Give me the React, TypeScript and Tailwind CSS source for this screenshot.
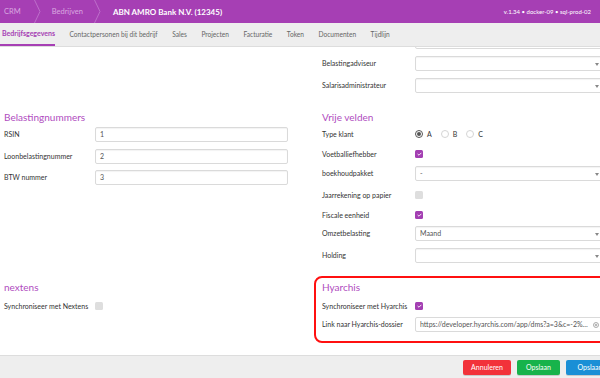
import React from "react";

const font = { fontFamily: "Lato, 'Noto Sans', sans-serif" };

function Chevron() {
  return (
    <svg width="7" height="23" viewBox="0 0 7 23" className="shrink-0">
      <polyline points="0.5,0 6,11.5 0.5,23" fill="none" stroke="#bd6fca" strokeWidth="1" />
    </svg>
  );
}

function Caret() {
  return (
    <svg width="4" height="3" viewBox="0 0 4 3" className="absolute right-[4px] top-[6px]">
      <path d="M0 0 L4 0 L2 3 Z" fill="#888" />
    </svg>
  );
}

function TextInput({ value, width, select }: { value?: string; width: string; select?: boolean }) {
  return (
    <div
      className={`relative h-[15px] ${width} shrink-0 rounded-[2px] border border-[#dadada] bg-white pl-[4px] text-[7px] leading-[13px] text-[#555] shadow-[inset_0_1px_1px_rgba(0,0,0,0.05)]`}
    >
      {value}
      {select && <Caret />}
    </div>
  );
}

function Check({ on }: { on: boolean }) {
  return on ? (
    <div className="flex h-[8px] w-[8px] items-center justify-center rounded-[1.5px] bg-[#a33fb2]">
      <svg width="5" height="4" viewBox="0 0 5 4">
        <polyline points="0.6,2 2,3.2 4.4,0.8" fill="none" stroke="#fff" strokeWidth="0.9" />
      </svg>
    </div>
  ) : (
    <div className="h-[8px] w-[8px] rounded-[1.5px] bg-[#dedede]" />
  );
}

function Radio({ label, on }: { label: string; on?: boolean }) {
  return (
    <div className="mr-[9px] flex items-center">
      <div
        className={`flex h-[8px] w-[8px] items-center justify-center rounded-full border ${
          on ? "border-[#555]" : "border-[#d5d5d5]"
        }`}
      >
        {on && <div className="h-[3.5px] w-[3.5px] rounded-full bg-[#555]" />}
      </div>
      <span className="ml-[4px] text-[7px] text-[#333]">{label}</span>
    </div>
  );
}

function Row({
  label,
  labelWidth,
  children,
  className = "",
}: {
  label: string;
  labelWidth: string;
  children?: React.ReactNode;
  className?: string;
}) {
  return (
    <div className={`flex items-center ${className}`}>
      <div className={`${labelWidth} shrink-0 text-[7px] text-[#333]`}>{label}</div>
      {children}
    </div>
  );
}

function Heading({ children, className = "" }: { children: React.ReactNode; className?: string }) {
  return <div className={`h-[12px] text-[10px] leading-[12px] text-[#b04cc0] ${className}`}>{children}</div>;
}

export default function App() {
  const tabs = [
    "Contactpersonen bij dit bedrijf",
    "Sales",
    "Projecten",
    "Facturatie",
    "Token",
    "Documenten",
    "Tijdlijn",
  ];
  const L = "w-[91px]";
  const R = "w-[93px]";
  const rIn = "w-[189px]";

  return (
    <div style={font} className="flex h-[378px] w-[600px] flex-col overflow-hidden bg-white">
      {/* header */}
      <div className="flex h-[23px] shrink-0 items-center bg-[#a63fb4]">
        <span className="ml-[4px] text-[7.5px] text-[#d9a9e0]">CRM</span>
        <span className="ml-[13px]"><Chevron /></span>
        <span className="ml-[11px] text-[7.5px] text-[#d9a9e0]">Bedrijven</span>
        <span className="ml-[11px]"><Chevron /></span>
        <span className="ml-[12px] text-[8px] font-bold text-white">ABN AMRO Bank N.V. (12345)</span>
        <span className="ml-auto mr-[9px] text-[6px] text-white">v.1.34 • docker-09 • sql-prod-02</span>
      </div>

      {/* tabs */}
      <div className="flex h-[24px] shrink-0 items-stretch gap-[14.5px] border-b border-[#dddddd] bg-[#eeeeee]">
        <div className="flex items-center border-b-2 border-[#a63fb4] pl-[2px] text-[7px] font-bold text-[#a63fb4]">
          Bedrijfsgegevens
        </div>
        {tabs.map((t) => (
          <div key={t} className="flex items-center text-[6.6px] text-[#666]">
            {t}
          </div>
        ))}
      </div>

      {/* content */}
      <div className="flex min-h-0 flex-1 flex-col overflow-hidden">
        {/* section A */}
        <div className="flex shrink-0">
          <div className="w-[314px] shrink-0" />
          <div className="pl-[8px]">
            <div className="-mt-[13px] ml-[93px] mb-[7px]">
              <TextInput width={rIn} select />
            </div>
            <Row label="Belastingadviseur" labelWidth={R} className="mb-[7px]">
              <TextInput width={rIn} select />
            </Row>
            <Row label="Salarisadministrateur" labelWidth={R}>
              <TextInput width={rIn} select />
            </Row>
          </div>
        </div>

        {/* section B */}
        <div className="mt-[18px] flex shrink-0 items-start">
          <div className="w-[314px] shrink-0 pl-[4px]">
            <Heading className="mb-[4px]">Belastingnummers</Heading>
            <Row label="RSIN" labelWidth={L} className="mb-[7px]">
              <TextInput value="1" width="w-[193px]" />
            </Row>
            <Row label="Loonbelastingnummer" labelWidth={L} className="mb-[6px]">
              <TextInput value="2" width="w-[193px]" />
            </Row>
            <Row label="BTW nummer" labelWidth={L}>
              <TextInput value="3" width="w-[193px]" />
            </Row>
          </div>
          <div className="pl-[8px]">
            <Heading className="mb-[4px]">Vrije velden</Heading>
            <Row label="Type klant" labelWidth={R} className="mb-[6px] h-[14px]">
              <Radio label="A" on />
              <Radio label="B" />
              <Radio label="C" />
            </Row>
            <Row label="Voetballiefhebber" labelWidth={R} className="mb-[5px] h-[14px]">
              <Check on />
            </Row>
            <Row label="boekhoudpakket" labelWidth={R} className="mb-[7px]">
              <TextInput value="-" width={rIn} select />
            </Row>
            <Row label="Jaarrekening op papier" labelWidth={R} className="mb-[6px] h-[14px]">
              <Check on={false} />
            </Row>
            <Row label="Fiscale eenheid" labelWidth={R} className="mb-[4px] h-[14px]">
              <Check on />
            </Row>
            <Row label="Omzetbelasting" labelWidth={R} className="mb-[7px]">
              <TextInput value="Maand" width={rIn} select />
            </Row>
            <Row label="Holding" labelWidth={R}>
              <TextInput width={rIn} select />
            </Row>
          </div>
        </div>

        {/* section C */}
        <div className="mt-[13px] flex shrink-0 items-start">
          <div className="w-[314px] shrink-0 pl-[4px] pt-[5px]">
            <Heading className="mb-[6px]">nextens</Heading>
            <Row label="Synchroniseer met Nextens" labelWidth={L} className="h-[14px]">
              <Check on={false} />
            </Row>
          </div>
          <div className="w-[300px] shrink-0 rounded-[8px] border-2 border-[#ff1010] pb-[9px] pl-[6px] pt-[3px]">
            <Heading className="mb-[6px]">Hyarchis</Heading>
            <Row label="Synchroniseer met Hyarchis" labelWidth={R} className="mb-[4px] h-[14px]">
              <Check on />
            </Row>
            <Row label="Link naar Hyarchis-dossier" labelWidth={R}>
              <div className="relative h-[15px] w-[189px] shrink-0 overflow-hidden rounded-[2px] border border-[#dadada] bg-white pl-[4px] pr-[12px] text-[7px] leading-[13px] text-[#555]">
                <div className="truncate">https://developer.hyarchis.com/app/dms?a=3&amp;c=-2%2C0%2C0%2C0</div>
                <svg width="6" height="6" viewBox="0 0 6 6" className="absolute right-[4px] top-[3.5px]">
                  <circle cx="3" cy="3" r="2.5" fill="none" stroke="#888" strokeWidth="0.7" />
                  <path d="M1.8 3 H4.2 M3 1.8 V4.2" stroke="#888" strokeWidth="0.7" />
                </svg>
              </div>
            </Row>
          </div>
        </div>
      </div>

      {/* footer */}
      <div className="flex h-[23px] w-[620px] shrink-0 items-center justify-end gap-[6px] border-t border-[#dddddd] bg-[#eeeeee] pr-[6px]">
        <button className="h-[15px] w-[48px] rounded-[2px] bg-[#f2323a] text-[7px] text-white shadow-[0_1px_0_rgba(0,0,0,0.15)]">
          Annuleren
        </button>
        <button className="h-[15px] w-[43px] rounded-[2px] bg-[#17b34b] text-[7px] text-white shadow-[0_1px_0_rgba(0,0,0,0.15)]">
          Opslaan
        </button>
        <button className="h-[15px] w-[48px] rounded-[2px] bg-[#1a8fd6] text-[7px] text-white shadow-[0_1px_0_rgba(0,0,0,0.15)]">
          Opslaan
        </button>
      </div>
    </div>
  );
}
